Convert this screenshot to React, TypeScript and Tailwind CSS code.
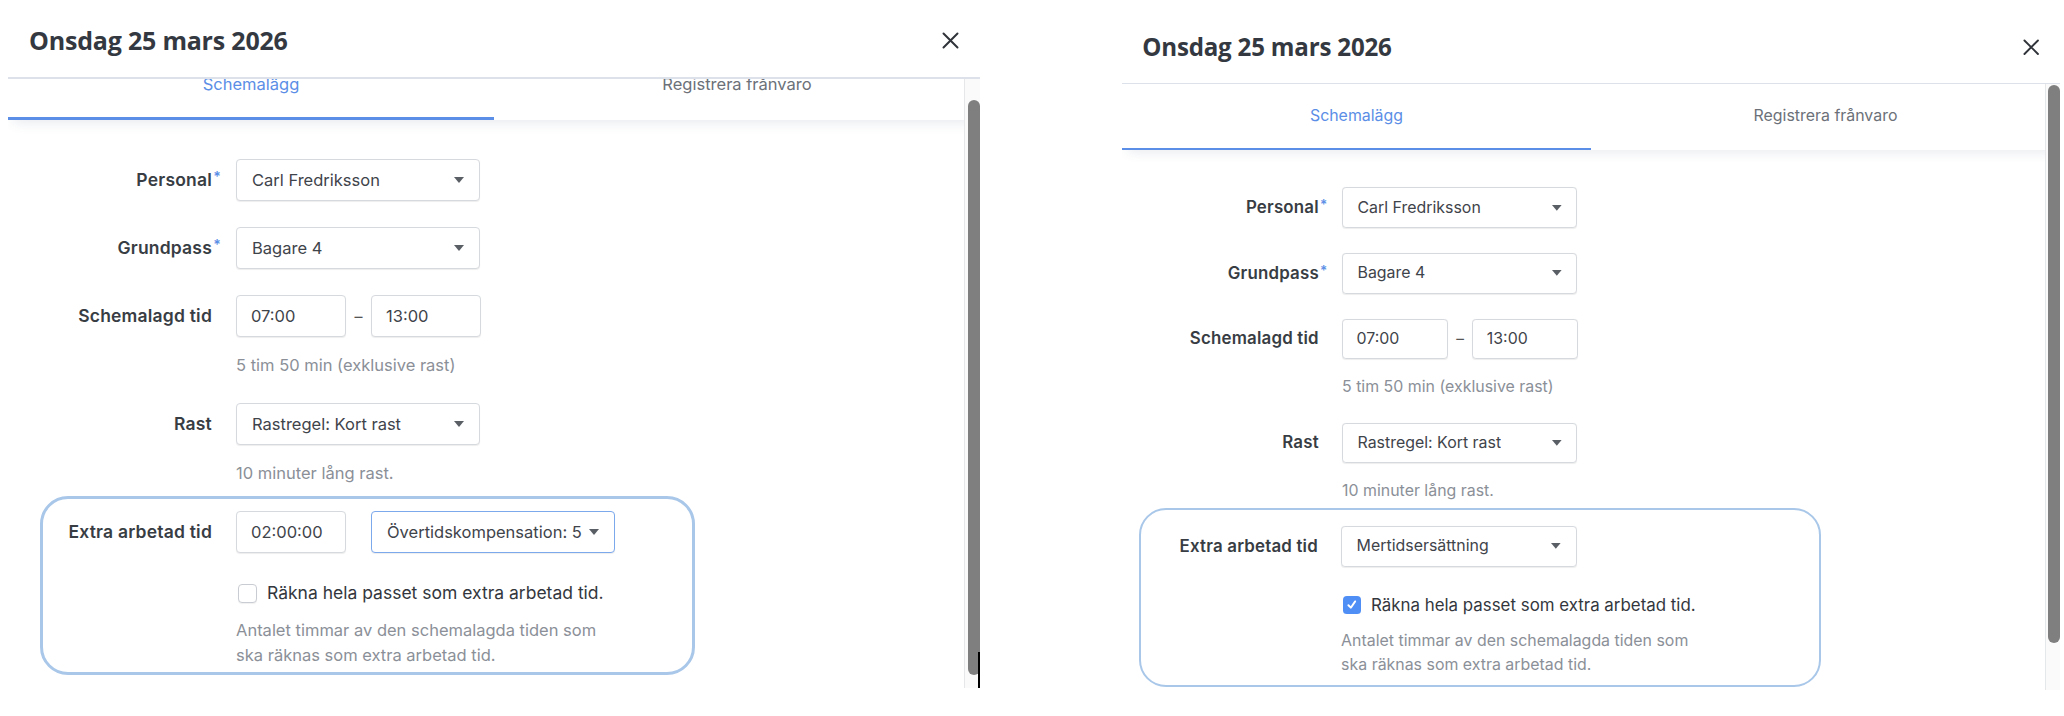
import React from 'react';

const BODY_FONT = "font-['Inter','Liberation_Sans',sans-serif]";

function Caret() {
  return (
    <svg width="10" height="6" viewBox="0 0 10 6" className="shrink-0">
      <polygon points="0,0 10,0 5,6" fill="#5a5f66" />
    </svg>
  );
}

function CloseIcon() {
  return (
    <svg width="17" height="17" viewBox="0 0 17 17">
      <path d="M1.5 1.5 L15.5 15.5 M15.5 1.5 L1.5 15.5" stroke="#30343a" strokeWidth="2" strokeLinecap="round" />
    </svg>
  );
}

function Select({ value, focused = false }: { value: string; focused?: boolean }) {
  return (
    <div
      className={`flex h-[42px] w-[244px] items-center justify-between rounded-[4px] border bg-white pl-[15px] pr-[15px] text-[16.5px] text-[#3f444b] shadow-[0_1px_1px_rgba(0,0,0,0.07)] ${
        focused ? 'border-[#7ca8ec]' : 'border-[#d6d9de]'
      }`}
    >
      <span className="truncate">{value}</span>
      <Caret />
    </div>
  );
}

function TextInput({ value }: { value: string }) {
  return (
    <div className="flex h-[42px] w-[110px] items-center rounded-[4px] border border-[#d6d9de] bg-white pl-[14px] text-[16.5px] text-[#3f444b] shadow-[0_1px_1px_rgba(0,0,0,0.07)]">
      {value}
    </div>
  );
}

function Label({ text, required = false, width }: { text: string; required?: boolean; width: string }) {
  return (
    <div className={`${width} shrink-0 pr-[24px] text-right`}>
      <span className="relative text-[17.5px] font-semibold tracking-[0.2px] text-[#383d44]">
        {text}
        {required && <span className="absolute -right-[9px] -top-[3px] text-[14px] font-semibold text-[#5b8ee6]">*</span>}
      </span>
    </div>
  );
}

function Row({ label, required, width = 'w-[228px]', children }: { label: string; required?: boolean; width?: string; children: React.ReactNode }) {
  return (
    <div className="flex h-[42px] items-center">
      <Label text={label} required={required} width={width} />
      <div className="flex items-center">{children}</div>
    </div>
  );
}

function Helper({ children, className = '' }: { children: React.ReactNode; className?: string }) {
  return <p className={`ml-[228px] text-[16.5px] leading-[20px] text-[#8b9098] ${className}`}>{children}</p>;
}

interface PanelProps {
  scrolled: boolean;
  extraTime?: string;
  compensation: string;
  compensationFocused?: boolean;
  checked: boolean;
  boxClass: string;
  boxLabelWidth: string;
  boxCheckIndent: string;
  scrollHeight: string;
  thumbClass: string;
  showCursor?: boolean;
}

function Panel({
  scrolled,
  extraTime,
  compensation,
  compensationFocused,
  checked,
  boxClass,
  boxLabelWidth,
  boxCheckIndent,
  scrollHeight,
  thumbClass,
  showCursor,
}: PanelProps) {
  return (
    <div className={`w-[972px] bg-white ${BODY_FONT}`}>
      {/* Header */}
      <div className="flex h-[79px] items-center justify-between border-b-2 border-[#dde2ea] pl-[21px] pr-[21px] pt-[4px]">
        <h2 className="font-['Open_Sans',sans-serif] text-[25px] font-bold tracking-[-0.2px] text-[#343941]">
          Onsdag 25 mars 2026
        </h2>
        <CloseIcon />
      </div>

      {/* Scroll area */}
      <div className={`relative overflow-hidden ${scrollHeight}`}>
        <div className={scrolled ? '-mt-[27px]' : ''}>
          {/* Tabs */}
          <div className="relative z-10 grid grid-cols-2 bg-white shadow-[0_8px_12px_-6px_rgba(70,90,130,0.14)]">
            <div className="flex h-[68px] items-center justify-center border-b-[3px] border-[#5b8ee6] text-[16.5px] text-[#5b8ee6]">
              Schemalägg
            </div>
            <div className="flex h-[68px] items-center justify-center border-b-[3px] border-transparent text-[16.5px] text-[#6c7179]">
              Registrera frånvaro
            </div>
          </div>

          {/* Form */}
          <div className="pt-[39px]">
            <Row label="Personal" required>
              <Select value="Carl Fredriksson" />
            </Row>
            <div className="mt-[26px]">
              <Row label="Grundpass" required>
                <Select value="Bagare 4" />
              </Row>
            </div>
            <div className="mt-[26px]">
              <Row label="Schemalagd tid">
                <TextInput value="07:00" />
                <span className="w-[25px] text-center text-[16px] text-[#555]">–</span>
                <TextInput value="13:00" />
              </Row>
            </div>
            <Helper className="mt-[18px]">5 tim 50 min (exklusive rast)</Helper>
            <div className="mt-[28px]">
              <Row label="Rast">
                <Select value="Rastregel: Kort rast" />
              </Row>
            </div>
            <Helper className="mt-[18px]">10 minuter lång rast.</Helper>

            {/* Highlighted section */}
            <div className={`rounded-[28px] border-[3px] border-[#a9c7e9] ${boxClass}`}>
              <Row label="Extra arbetad tid" width={boxLabelWidth}>
                {extraTime && (
                  <>
                    <TextInput value={extraTime} />
                    <span className="w-[25px]" />
                  </>
                )}
                <Select value={compensation} focused={compensationFocused} />
              </Row>
              <div className={`mt-[30px] flex h-[20px] items-center ${boxCheckIndent}`}>
                {checked ? (
                  <span className="ml-[2px] flex h-[19px] w-[19px] items-center justify-center rounded-[4px] bg-[#4f8ef5]">
                    <svg width="12" height="12" viewBox="0 0 12 12">
                      <path d="M2.5 6.5 L5 9 L9.5 2.5" fill="none" stroke="white" strokeWidth="2" strokeLinecap="round" strokeLinejoin="round" />
                    </svg>
                  </span>
                ) : (
                  <span className="ml-[2px] h-[19px] w-[19px] rounded-[4px] border border-[#c9cdd3] bg-white shadow-[0_1px_1px_rgba(0,0,0,0.06)]" />
                )}
                <span className="ml-[10px] text-[17.5px] text-[#33373d]">Räkna hela passet som extra arbetad tid.</span>
              </div>
              <p className={`mt-[15px] text-[16.5px] leading-[25px] text-[#8b9098] ${boxCheckIndent}`}>
                Antalet timmar av den schemalagda tiden som
                <br />
                ska räknas som extra arbetad tid.
              </p>
            </div>
          </div>
        </div>

        {/* Scrollbar */}
        <div className="absolute bottom-0 right-0 top-0 z-20 w-[16px] border-l border-[#e6e7e9] bg-[#fafafa]">
          <div className={`absolute left-[3px] w-[12px] rounded-full bg-[#7f7f7f] ${thumbClass}`} />
          {showCursor && <div className="absolute bottom-0 right-0 h-[36px] w-[2px] bg-black" />}
        </div>
      </div>
    </div>
  );
}

export default function App() {
  return (
    <div className="flex h-[716px] w-[2064px] overflow-hidden bg-white">
      <div className="ml-[8px]">
        <Panel
          scrolled
          extraTime="02:00:00"
          compensation="Övertidskompensation: 5"
          compensationFocused
          checked={false}
          boxClass="ml-[32px] w-[655px] mt-[13px] pt-[12px] pb-[4px]"
          boxLabelWidth="w-[193px]"
          boxCheckIndent="pl-[193px]"
          scrollHeight="h-[609px]"
          thumbClass="top-[21px] h-[575px]"
          showCursor
        />
      </div>
      <div className="ml-[142px] pt-[8px]">
        <div className="w-[976px] [zoom:0.965]">
          <Panel
            scrolled={false}
            compensation="Mertidsersättning"
            checked
            boxClass="ml-[18px] w-[706px] mt-[8px] pt-[17px] pb-[8px]"
            boxLabelWidth="w-[207px]"
            boxCheckIndent="pl-[207px]"
            scrollHeight="h-[628px]"
            thumbClass="top-[1px] h-[578px]"
          />
        </div>
      </div>
    </div>
  );
}
